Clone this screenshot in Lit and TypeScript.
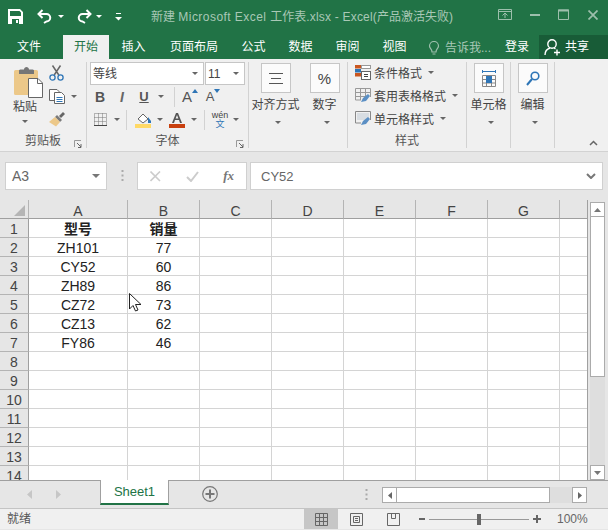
import { LitElement, html, css, svg } from "lit";
import { customElement } from "lit/decorators.js";

const ic = (w: number, h: number, body: unknown, cls = "") =>
  html`<svg class="ic ${cls}" width=${w} height=${h} viewBox="0 0 ${w} ${h}">${body}</svg>`;
const caret = html`<i class="caret"></i>`;

const rows: [string, string][] = [
  ["型号", "销量"], ["ZH101", "77"], ["CY52", "60"], ["ZH89", "86"], ["CZ72", "73"], ["CZ13", "62"], ["FY86", "46"],
];

@customElement("app-root")
export class AppRoot extends LitElement {
  static styles = css`
    :host { display: block; width: 608px; height: 530px; overflow: hidden; position: relative; background: #e6e6e6;
      font-family: "Liberation Sans", "Noto Sans CJK SC", sans-serif; font-size: 12px; color: #444; }
    .ic { display: block; flex: none; }
    .caret { display: block; flex: none; width: 0; height: 0; border: 3px solid transparent; border-top: 3px solid #666; border-bottom: 0; }
    .title { height: 35px; background: #217346; display: flex; align-items: center; position: relative; }
    .qat { display: flex; align-items: center; padding: 0 0 2px 8px; }
    .qat .caret { border-top-color: #fff; }
    .undo { margin-left: 14px; }
    .redo { margin-left: 12px; }
    .qcaret1 { margin-left: 5px; }
    .qcaret2 { margin-left: 4px; }
    .custom { margin-left: 13px; }
    .doc { position: absolute; left: 151px; top: 9px; color: #a9c8b6; white-space: nowrap; font-size: 12px; line-height: 16px; }
    .l1 { letter-spacing: .45px; }
    .l2 { letter-spacing: .2px; }
    .win { margin-left: auto; display: flex; align-items: center; padding: 0 10px 6px 0; }
    .w-min { margin-left: 18px; }
    .w-max { margin-left: 18px; }
    .w-close { margin-left: 19px; }
    .tabs { height: 24px; background: #217346; display: grid; grid-template-columns: 58px 5px 46px 49px 72px 47px 47px 47px 47px 10px 67px 44px 1fr; color: #fff; line-height: 24px; text-align: center; }
    .tab.on { background: #f0f0f0; color: #217346; }
    .tell { color: #a9c8b6; display: flex; align-items: center; gap: 5px; padding-left: 0; text-align: left; white-space: nowrap; }
    .share { background: #185c37; display: flex; align-items: center; gap: 4px; padding: 0 0 1px 5px; margin-bottom: 1px; }
    .ribbon { height: 93px; box-sizing: border-box; background: #f0f0f0; border-bottom: 1px solid #d2d2d2; padding-top: 3px; display: flex; position: relative; }
    .group { flex: none; height: 86px; display: flex; flex-direction: column; box-sizing: border-box; position: relative; }
    .group.sep { border-right: 1px solid #d2d2d2; }
    .g-clip { width: 87px; }
    .g-font { width: 162px; }
    .g-align { width: 53px; }
    .g-num { width: 46px; }
    .g-style { width: 119px; }
    .g-cell { width: 44px; }
    .body { height: 72px; display: flex; }
    .glabel { text-align: center; line-height: 14px; height: 14px; color: #555; margin-top: 2px; }
    .launch { position: absolute; right: 4px; bottom: 0; }
    .paste { width: 49px; display: flex; flex-direction: column; align-items: center; padding: 4px 0 0 7px; box-sizing: border-box; }
    .paste .t { margin-top: 1px; line-height: 16px; color: #444; margin-right: 6px; }
    .paste .caret { margin: 5px 6px 0 0; }
    .minis { display: flex; flex-direction: column; }
    .mini { display: flex; align-items: center; height: 23px; }
    .mini.top { align-items: flex-start; padding-top: 3px; box-sizing: border-box; }
    .copy-caret { margin-left: 6px; }
    .fontcol { padding: 0 0 0 3px; display: flex; flex-direction: column; }
    .combos { display: flex; gap: 1px; height: 23px; }
    .combo { background: #fff; border: 1px solid #c6c6c6; box-sizing: border-box; display: flex; align-items: center; justify-content: space-between; padding: 0 5px 0 2px; line-height: 20px; }
    .c-name { width: 114px; }
    .c-size { width: 40px; }
    .tools { display: flex; align-items: center; height: 23px; }
    .vsep { width: 1px; height: 20px; background: #d2d2d2; flex: none; }
    .tb { display: flex; align-items: center; justify-content: center; flex: none; }
    .w6 { width: 6px; } .w14 { width: 14px; } .w15 { width: 15px; } .w16 { width: 16px; } .w20 { width: 20px; } .w24 { width: 24px; }
    .ml1 { margin-left: 1px; } .ml2 { margin-left: 2px; } .ml3 { margin-left: 3px; } .ml6 { margin-left: 6px; } .ml8 { margin-left: 8px; }
    .fb { font-weight: bold; font-size: 14px; color: #555; }
    .fi { font-style: italic; font-weight: bold; font-size: 14px; color: #666; }
    .fu { font-weight: bold; font-size: 13px; color: #555; text-decoration: underline; }
    .grow { width: 30px; font-size: 15px; color: #555; align-items: flex-end; }
    .shrink { width: 24px; font-size: 13px; color: #555; align-items: flex-end; margin-left: -4px; }
    .grow span, .shrink span { line-height: 15px; }
    .tri { margin: 0 0 11px 0; }
    .wen { flex-direction: column; line-height: 9px; font-size: 9px; color: #444; }
    .wen b { color: #2e75b6; font-weight: normal; font-size: 9px; }
    .big { display: flex; flex-direction: column; align-items: center; width: 100%; }
    .box { width: 30px; height: 30px; border: 1px solid #c6c6c6; background: #fbfbfb; box-sizing: border-box; display: flex; align-items: center; justify-content: center; font-size: 15px; color: #444; margin-top: 1px; }
    .big .t { margin-top: 4px; line-height: 16px; white-space: nowrap; }
    .big .caret { margin: 8px 0 0 4px; }
    .stylecol { display: flex; flex-direction: column; padding: 0 0 0 7px; margin-top: -1px; }
    .srow { height: 23px; display: flex; align-items: center; gap: 3px; }
    .srow .caret { margin-left: 3px; }
    .collapse { position: absolute; right: 10px; bottom: 5px; }
    .fbar { height: 48px; box-sizing: border-box; padding: 10px 5px 0 5px; display: flex; align-items: flex-start; }
    .fbox { height: 28px; background: #fff; border: 1px solid #d0d0d0; box-sizing: border-box; display: flex; align-items: center; }
    .name { width: 102px; padding: 0 6px; justify-content: space-between; font-size: 14px; color: #666; }
    .name .caret { border-width: 4px 4px 0; border-top-color: #777; }
    .dots { width: 30px; display: flex; justify-content: center; align-items: center; height: 27px; }
    .fx { width: 110px; justify-content: space-between; padding: 0 12px 0 12px; margin-right: 3px; }
    .fxt { font-family: "Liberation Serif", serif; font-style: italic; font-weight: bold; font-size: 13px; color: #777; }
    .fval { flex: 1; padding: 0 6px 0 10px; justify-content: space-between; font-size: 13px; color: #666; }
    .sheet { height: 280px; display: flex; }
    .grid { width: 587px; height: 280px; overflow: hidden; display: grid; grid-template-columns: 29px 99px repeat(6, 72px) 27px; grid-auto-rows: 19px; font-size: 14px; color: #222; background: #fff; border-right: 1px solid #a0a0a0; flex: none; }
    .grid > div { box-sizing: border-box; border-right: 1px solid #d4d4d4; border-bottom: 1px solid #d4d4d4; text-align: center; line-height: 20px; overflow: hidden; white-space: nowrap; }
    .grid > .ch { background: #e6e6e6; border-right-color: #b4b4b4; border-bottom-color: #9f9f9f; color: #444; line-height: 22px; }
    .grid > .rh { background: #e6e6e6; border-right-color: #9f9f9f; border-bottom-color: #b4b4b4; color: #444; line-height: 20px; }
    .grid > .corner { background: #e6e6e6; border-right-color: #b4b4b4; border-bottom-color: #9f9f9f; display: flex; justify-content: flex-end; align-items: flex-end; padding: 0 3px 2px 0; }
    .grid > .last { border-right: 0; }
    .grid > .b { font-weight: bold; line-height: 21px; }
    .vs { width: 15px; margin: 2px 0 0 2px; display: flex; flex-direction: column; flex: none; height: 278px; background: #dedede; }
    .sb { height: 15px; width: 15px; box-sizing: border-box; background: #fff; border: 1px solid #ababab; display: flex; align-items: center; justify-content: center; flex: none; }
    .vthumb { height: 160px; box-sizing: border-box; background: #fff; border: 1px solid #ababab; border-top: 0; }
    .sp { flex: 1; }
    .sbar { height: 28px; border-top: 1px solid #9f9f9f; box-sizing: border-box; display: flex; align-items: flex-start; background: #e6e6e6; }
    .nav { width: 100px; height: 27px; display: flex; align-items: center; gap: 24px; padding-left: 27px; box-sizing: border-box; flex: none; }
    .stab { width: 69px; height: 25px; box-sizing: border-box; background: #fff; border: 1px solid #a0a0a0; border-top: 0; border-bottom: 2px solid #217346; text-align: center; line-height: 24px; font-size: 13px; color: #217346; flex: none; margin-top: -1px; }
    .plus { margin: 5px 0 0 33px; }
    .sdots { margin: 8px 0 0 147px; }
    .hs { margin: 6px 0 0 14px; width: 205px; height: 16px; display: flex; background: #dedede; flex: none; }
    .hs .sb { height: 16px; }
    .hthumb { width: 153px; box-sizing: border-box; background: #fff; border: 1px solid #ababab; border-left: 0; }
    .status { height: 21px; box-sizing: border-box; border-top: 1px solid #c4c4c4; background: #f0f0f0; display: flex; align-items: center; color: #555; }
    .ready { width: 304px; padding-left: 7px; box-sizing: border-box; line-height: 20px; flex: none; }
    .vb { height: 20px; display: flex; align-items: center; justify-content: center; flex: none; }
    .vb.on { background: #c6c6c6; }
    .v1 { width: 34px; } .v2 { width: 36px; } .v3 { width: 39px; }
    .zbar { margin-left: 6px; }
    .slider { margin: 0 4px; }
    .zoom { color: #666; margin-left: 16px; }
    .cursor { position: absolute; left: 129px; top: 293px; }
  `;

  private group(label: string, cls: string, body: unknown, launch = false) {
    return html`<div class="group ${cls}">
      <div class="body">${body}</div>
      <div class="glabel">${label}</div>
      ${launch ? html`<div class="launch">${ic(8, 8, svg`<path d="M0.5 7V0.5H7" stroke="#999" fill="none"/><path d="M3 3L7 7M7 4V7.500H4" stroke="#666" fill="none"/>`)}</div>` : ""}
    </div>`;
  }

  private big(t: string, inner: unknown) {
    return html`<div class="big"><div class="box">${inner}</div><div class="t">${t}</div>${caret}</div>`;
  }

  render() {
    const wc = "#9dbfac";
    const cols = ["A", "B", "C", "D", "E", "F", "G", ""];
    const rowNums = Array.from({ length: 14 }, (_, i) => i);
    return html`
      <div class="title">
        <div class="qat">
          ${ic(15, 15, svg`<path fill-rule="evenodd" fill="#fff" d="M0 0H12L15 3V15H0ZM2 2V7H13V3.500L11.500 2ZM4 10V15H11V10ZM8 11H10V14H8Z"/>`)}
          ${ic(16, 15, svg`<path d="M3 5H9.500A3.700 3.700 0 0 1 9.500 12.500L7 14" fill="none" stroke="#fff" stroke-width="2"/><path d="M5.500 1L1.500 5L5.500 9" fill="none" stroke="#fff" stroke-width="2"/>`, "undo")}
          <i class="caret qcaret1"></i>
          ${ic(16, 15, svg`<path d="M13 5H6.500A3.700 3.700 0 0 0 6.500 12.500L9 14" fill="none" stroke="#fff" stroke-width="2"/><path d="M10.500 1L14.500 5L10.500 9" fill="none" stroke="#fff" stroke-width="2"/>`, "redo")}
          <i class="caret qcaret2"></i>
          ${ic(7, 8, svg`<path d="M1 .5H6" stroke="#fff"/><path d="M0 4H7L3.500 7.500Z" fill="#fff"/>`, "custom")}
        </div>
        <div class="doc">新建 <span class="l1">Microsoft Excel </span>工作表<span class="l2">.xlsx - Excel(</span>产品激活失败)</div>
        <div class="win">
          ${ic(14, 11, svg`<path d="M.5 .5H13.500V10.500H.5ZM.5 2.500H13.500" fill="none" stroke=${wc}/><path d="M7 9V4M4.500 6.500L7 4L9.500 6.500" fill="none" stroke=${wc}/>`)}
          ${ic(10, 2, svg`<path d="M0 1H10" stroke=${wc} stroke-width="2"/>`, "w-min")}
          ${ic(11, 11, svg`<path d="M.5 1H10.500V10.500H.5Z" fill="none" stroke=${wc}/><path d="M0 1.500H11" stroke=${wc} stroke-width="2"/>`, "w-max")}
          ${ic(10, 10, svg`<path d="M.5 .5L9.500 9.500M9.500 .5L.5 9.500" stroke=${wc} stroke-width="1.700"/>`, "w-close")}
        </div>
      </div>

      <div class="tabs">
        <div>文件</div><div></div>
        <div class="tab on">开始</div>
        <div>插入</div>
        <div>页面布局</div>
        <div>公式</div>
        <div>数据</div>
        <div>审阅</div>
        <div>视图</div>
        <div></div>
        <div class="tell">
          ${ic(12, 15, svg`<path d="M4 11C4 8 1.500 7.500 1.500 5A4.500 4.500 0 0 1 10.500 5C10.500 7.500 8 8 8 11ZM4.500 13H7.500" fill="none" stroke=${wc} stroke-width="1.200"/>`)}
          <span>告诉我...</span>
        </div>
        <div>登录</div>
        <div class="share">
          ${ic(17, 18, svg`<circle cx="8" cy="6" r="4.200" fill="none" stroke="#fff" stroke-width="1.400"/><path d="M1 17C1 13 3 11 6 10M10 10L11.500 11" fill="none" stroke="#fff" stroke-width="1.400"/><path d="M10 14.500H16M13 11.500V17.500" stroke="#fff" stroke-width="1.400"/>`)}
          <span>共享</span>
        </div>
      </div>

      <div class="ribbon">
        ${this.group("剪贴板", "sep g-clip", html`
          <div class="paste">
            ${ic(29, 32, svg`
              <path d="M1.500 4H22.500A1.500 1.500 0 0 1 24 5.500V29H1.500A1.500 1.500 0 0 1 0 27.500V5.500A1.500 1.500 0 0 1 1.500 4Z" fill="#ecc889"/>
              <path d="M5 5.500A1.500 1.500 0 0 1 6.500 3.500H10C10 0 15 0 15 3.500H18.500A1.500 1.500 0 0 1 20 5.500V8H5Z" fill="#767676"/>
              <path d="M14.500 12.500H24L28.500 17V31.500H14.500Z" fill="#fff" stroke="#666"/><path d="M23.500 13V17.500H28" fill="none" stroke="#666"/>`)}
            <div class="t">粘贴</div>${caret}
          </div>
          <div class="minis">
            <div class="mini top">${ic(15, 16, svg`<path d="M3.500 0.5L9.800 10M11.500 0.5L5.200 10" stroke="#666" stroke-width="1.500"/><circle cx="3.500" cy="12.500" r="2.600" fill="none" stroke="#2e75b6" stroke-width="1.300"/><circle cx="11.500" cy="12.500" r="2.600" fill="none" stroke="#2e75b6" stroke-width="1.300"/>`)}</div>
            <div class="mini">${ic(16, 15, svg`<path d="M.5 .5H8L10 2.500V11.500H.5Z" fill="#fff" stroke="#666"/><path d="M5.500 3.500H12.500L15.500 6.500V14.500H5.500Z" fill="#fff" stroke="#666"/><path d="M7.500 8.500H13.500M7.500 10.500H13.500M7.500 12.500H13.500" stroke="#2e75b6"/>`)}<i class="caret copy-caret"></i></div>
            <div class="mini">${ic(16, 15, svg`<path d="M10 4L14 0L16 2L12 6Z" fill="#666"/><path d="M8 3L13 8L11 10L6 5Z" fill="#7b7b7b"/><path d="M6 5L11 10L7 14.500L0 10Z" fill="#ecc889"/>`)}</div>
          </div>
        `, true)}

        ${this.group("字体", "sep g-font", html`
          <div class="fontcol">
            <div class="combos">
              <div class="combo c-name">等线 ${caret}</div>
              <div class="combo c-size">11 ${caret}</div>
            </div>
            <div class="tools">
              <div class="tb w20 fb">B</div>
              <div class="tb w24 fi">I</div>
              <div class="tb w20 fu">U</div>
              <div class="tb w14">${caret}</div>
              <div class="vsep ml6"></div>
              <div class="tb grow"><span>A</span>${ic(6, 4, svg`<path d="M0 4L3 0L6 4Z" fill="#2e75b6"/>`, "tri")}</div>
              <div class="tb shrink"><span>A</span>${ic(6, 4, svg`<path d="M0 0L3 4L6 0Z" fill="#2e75b6"/>`, "tri")}</div>
            </div>
            <div class="tools">
              <div class="tb w20">${ic(13, 13, svg`<path d="M.5 .5H12.500V12.500H.5ZM.5 4.500H12.500M.5 8.500H12.500M4.500 .5V12.500M8.500 .5V12.500" fill="none" stroke="#777" stroke-dasharray="1 1"/><path d="M0 12.500H13" stroke="#444"/>`)}</div>
              <div class="tb w14">${caret}</div>
              <div class="vsep ml2"></div>
              <div class="tb w16 ml8">${ic(16, 16, svg`<path d="M3 7L8 2L13 7L8 11Z" fill="#fff" stroke="#666"/><path d="M13 5L16 9V11H13Z" fill="#2e75b6"/><rect x="0" y="12" width="16" height="4" fill="#ffd966"/>`)}</div>
              <div class="tb w15 ml1">${caret}</div>
              <div class="tb w16 ml2">${ic(16, 16, svg`<path d="M3 11L7 1H9L13 11H11L10 8H6L5 11ZM6.600 6.500H9.400L8 3Z" fill="#555" fill-rule="evenodd"/><rect x="0" y="12" width="16" height="4" fill="#c9400f"/>`)}</div>
              <div class="tb w15 ml1">${caret}</div>
              <div class="vsep ml3"></div>
              <div class="tb w24 ml3 wen"><span>wén</span><b>文</b></div>
              <div class="tb w6 ml1">${caret}</div>
            </div>
          </div>
        `, true)}

        ${this.group("", "g-align", this.big("对齐方式", ic(14, 11, svg`<path d="M0 .5H14M2 5.500H12M0 10.500H14" stroke="#555"/>`)))}
        ${this.group("", "sep g-num", this.big("数字", html`<span>%</span>`))}

        ${this.group("样式", "sep g-style", html`
          <div class="stylecol">
            <div class="srow">${ic(16, 15, svg`<rect x="0" y="0" width="6" height="3.500" fill="#c9561f"/><rect x="0" y="4" width="6" height="3.500" fill="#2e75b6"/><rect x="0" y="8" width="6" height="3.500" fill="#c9561f"/><rect x="6.500" y=".5" width="9" height="3" fill="#fff" stroke="#999"/><rect x="6.500" y="6.500" width="9" height="8" fill="#fff" stroke="#666"/><path d="M9 9.500H13M9 11.500H13" stroke="#444"/>`)}<span>条件格式</span>${caret}</div>
            <div class="srow">${ic(16, 15, svg`<path d="M.5 .5H15.500V9M.5 .5V12H6M.5 4.500H15.500M.5 8.500H10M5.500 .5V12M10.500 .5V9" fill="none" stroke="#999"/><path d="M6 14L8 10L13 6L15 8L11 13Z" fill="#5b8fc4"/>`)}<span>套用表格格式</span>${caret}</div>
            <div class="srow">${ic(16, 15, svg`<path d="M.5 .5H15.500V9M.5 .5V12H6" fill="none" stroke="#888"/><rect x="2" y="2" width="12" height="7" fill="#d8dde2"/><path d="M6 14L8 10L13 6L15 8L11 13Z" fill="#5b8fc4"/>`)}<span>单元格样式</span>${caret}</div>
          </div>
        `)}

        ${this.group("", "sep g-cell", this.big("单元格", ic(16, 17, svg`<path d="M1 1.500H15M1.500 0V3M14.500 0V3" stroke="#2e75b6"/><path d="M1.500 5.500H14.500V16.500H1.500ZM1.500 9.500H14.500M1.500 13H14.500M5.500 5.500V16.500M10.500 5.500V16.500" fill="none" stroke="#888"/><rect x="5" y="6" width="6" height="7" fill="#2e75b6"/>`)))}
        ${this.group("", "sep g-cell", this.big("编辑", ic(14, 15, svg`<circle cx="9" cy="5" r="3.800" fill="none" stroke="#2e75b6" stroke-width="1.600"/><path d="M6 8L1 14" stroke="#2e75b6" stroke-width="2"/>`)))}
        <div class="collapse">${ic(9, 6, svg`<path d="M1 5L4.500 1.500L8 5" fill="none" stroke="#666" stroke-width="1.500"/>`)}</div>
      </div>

      <div class="fbar">
        <div class="fbox name"><span>A3</span>${caret}</div>
        <div class="dots">${ic(3, 11, svg`<path d="M1.500 0V2M1.500 4.500V6.500M1.500 9V11" stroke="#aaa" stroke-width="2"/>`)}</div>
        <div class="fbox fx">
          ${ic(11, 11, svg`<path d="M.5 .5L10 10M10 .5L.5 10" stroke="#ccc" stroke-width="1.600"/>`)}
          ${ic(13, 11, svg`<path d="M1 6L5 10L12 1" fill="none" stroke="#ccc" stroke-width="2"/>`)}
          <span class="fxt">fx</span>
        </div>
        <div class="fbox fval"><span>CY52</span>${ic(10, 6, svg`<path d="M1 1L5 5L9 1" fill="none" stroke="#777" stroke-width="2"/>`)}</div>
      </div>

      <div class="sheet">
        <div class="grid">
          <div class="corner">${ic(11, 11, svg`<path d="M11 0V11H0Z" fill="#b5b5b5"/>`)}</div>
          ${cols.map((c, i) => html`<div class="ch ${i === 7 ? "last" : ""}">${c}</div>`)}
          ${rowNums.map((r) => html`
            <div class="rh">${r + 1}</div>
            ${cols.map((_, i) => {
              const v = i < 2 && r < rows.length ? rows[r][i] : "";
              return html`<div class="${r === 0 ? "b" : ""} ${i === 7 ? "last" : ""}">${v}</div>`;
            })}
          `)}
        </div>
        <div class="vs">
          <div class="sb">${ic(7, 4, svg`<path d="M0 4L3.500 0L7 4Z" fill="#777"/>`)}</div>
          <div class="vthumb"></div>
          <div class="sp"></div>
          <div class="sb">${ic(7, 4, svg`<path d="M0 0L3.500 4L7 0Z" fill="#777"/>`)}</div>
        </div>
      </div>

      <div class="sbar">
        <div class="nav">
          ${ic(5, 9, svg`<path d="M5 0V9L0 4.500Z" fill="#c6c6c6"/>`)}
          ${ic(5, 9, svg`<path d="M0 0V9L5 4.500Z" fill="#c6c6c6"/>`)}
        </div>
        <div class="stab">Sheet1</div>
        <div class="plus">${ic(16, 16, svg`<circle cx="8" cy="8" r="7.300" fill="none" stroke="#777" stroke-width="1.200"/><path d="M3.500 8H12.500M8 3.500V12.500" stroke="#777" stroke-width="2"/>`)}</div>
        <div class="sdots">${ic(3, 11, svg`<path d="M1.500 0V2M1.500 4.500V6.500M1.500 9V11" stroke="#aaa" stroke-width="2"/>`)}</div>
        <div class="hs">
          <div class="sb">${ic(4, 7, svg`<path d="M4 0V7L0 3.500Z" fill="#666"/>`)}</div>
          <div class="hthumb"></div>
          <div class="sp"></div>
          <div class="sb">${ic(4, 7, svg`<path d="M0 0V7L4 3.500Z" fill="#666"/>`)}</div>
        </div>
      </div>

      <div class="status">
        <div class="ready">就绪</div>
        <div class="vb on v1">${ic(13, 13, svg`<path d="M.5 .5H12.500V12.500H.5ZM.5 4.500H12.500M.5 8.500H12.500M4.500 .5V12.500M8.500 .5V12.500" fill="none" stroke="#666"/>`)}</div>
        <div class="vb v2">${ic(13, 13, svg`<path d="M.5 .5H12.500V12.500H.5Z" fill="none" stroke="#666"/><path d="M3.500 3.500H9.500V9.500H3.500ZM5 5.500H8M5 7.500H8" fill="none" stroke="#666"/>`)}</div>
        <div class="vb v3">${ic(13, 13, svg`<path d="M.5 .5H12.500V12.500H.5ZM4.500 .5V5.500H8.500V.5" fill="none" stroke="#666"/>`)}</div>
        <div class="vb zbar">
          ${ic(6, 2, svg`<path d="M0 1H6" stroke="#666" stroke-width="2"/>`)}
          ${ic(100, 13, svg`<path d="M0 6.500H100" stroke="#999"/><rect x="48" y="1" width="4" height="11" fill="#666"/>`, "slider")}
          ${ic(8, 8, svg`<path d="M0 4H8M4 0V8" stroke="#666" stroke-width="2"/>`)}
        </div>
        <div class="zoom">100%</div>
      </div>

      <div class="cursor">${ic(13, 19, svg`<path d="M.5 .5V16L4 12.500L6.500 18L9 17L6.500 11.500H12Z" fill="#fff" stroke="#222"/>`)}</div>
    `;
  }
}
